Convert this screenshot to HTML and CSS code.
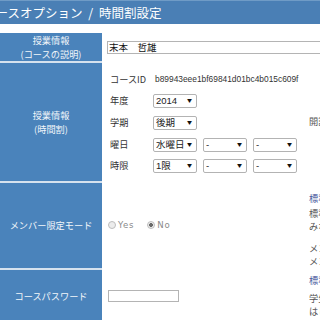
FILE: index.html
```html
<!DOCTYPE html>
<html lang="ja">
<head>
    <meta charset="UTF-8">
    <meta name="viewport" content="width=device-width, initial-scale=1.0">
    <title>コースオプション / 時間割設定</title>
    <link rel="stylesheet" href="styles.css">
</head>
<body>

    <h2 class="title">コースオプション / 時間割設定</h2>

    <table class="form-table">
        <tr>
            <th class="two-line">授業情報<br>(コースの説明)</th>
            <td class="main" colspan="2">
                <input type="text" class="text wide" value="末本　哲雄">
            </td>
        </tr>

        <tr>
            <th>授業情報<br>(時間割)</th>
            <td class="main">
                <div class="fields">
                    <span class="label">コースID</span>
                    <span class="course-id">b89943eee1bf69841d01bc4b015c609f</span>

                    <span class="label">年度</span>
                    <span class="line">
                        <span class="sel"><select><option>2014</option></select></span>
                    </span>

                    <span class="label">学期</span>
                    <span class="line">
                        <span class="sel"><select><option>後期</option></select></span>
                    </span>

                    <span class="label">曜日</span>
                    <span class="line">
                        <span class="sel"><select><option>水曜日</option></select></span>
                        <span class="sel"><select><option>-</option></select></span>
                        <span class="sel"><select><option>-</option></select></span>
                    </span>

                    <span class="label">時限</span>
                    <span class="line">
                        <span class="sel"><select><option>1限</option></select></span>
                        <span class="sel"><select><option>-</option></select></span>
                        <span class="sel"><select><option>-</option></select></span>
                    </span>
                </div>
            </td>
            <td class="note middle">
                <div>開講期間は学期と曜日・時限で設定します</div>
            </td>
        </tr>

        <tr>
            <th>メンバー限定モード</th>
            <td class="main">
                <div class="radios">
                    <label><input type="radio" name="member" disabled> Yes</label>
                    <label><input type="radio" name="member" checked disabled> No</label>
                </div>
            </td>
            <td class="note member">
                <div class="note-head">標準設定：No</div>
                <div class="note-text">標準では登録された学生のみが閲覧できます。<br>みなさんのコースに合わせて設定してください。</div>
                <div class="note-text gap">メンバー限定モードを有効にすると、<br>メンバー以外はコースに入れません。</div>
            </td>
        </tr>

        <tr>
            <th>コースパスワード</th>
            <td class="main">
                <input type="text" class="text short">
            </td>
            <td class="note password">
                <div class="note-head">標準設定：なし</div>
                <div class="note-text small-gap">学生がコースに登録するときのパスワードです。<br>はじめて登録するときだけ入力します。</div>
            </td>
        </tr>
    </table>

</body>
</html>
```

FILE: styles.css
```css
html, body {
    overflow: hidden;
}

body {
    margin: 0;
    font-family: "Noto Sans CJK JP", "Liberation Sans", sans-serif;
    font-size: 9.2px;
    color: #333;
    background-color: #fff;
}

.title {
    margin: 0 0 9px 0;
    height: 23px;
    line-height: 24px;
    border-top: 1px solid #6f9bc6;
    background-color: #4a7fb5;
    color: #fff;
    font-size: 12.5px;
    font-weight: normal;
    text-indent: -17px;
    word-spacing: 3px;
    white-space: nowrap;
}

.form-table {
    border-collapse: separate;
    border-spacing: 0;
    width: 626px;
}

.form-table th,
.form-table td {
    padding: 0;
    border-top: 2px solid transparent;
}

.form-table tr:first-child th,
.form-table tr:first-child td {
    border-top: none;
}

.form-table th {
    width: 102px;
    background-color: #4a83bb;
    border-top-color: #d6e2ee;
    color: #f2f6fa;
    font-weight: normal;
    line-height: 14px;
    text-align: center;
    vertical-align: middle;
    white-space: nowrap;
}

.form-table th.two-line {
    height: 28px;
}

.main {
    width: 198px;
    padding-left: 5px !important;
    vertical-align: middle;
}

.text {
    display: block;
    box-sizing: border-box;
    height: 13px;
    margin: 0;
    padding: 0 1px;
    border: 1px solid #b4b4b4;
    font-family: "Noto Sans CJK JP", sans-serif;
    font-size: 9.5px;
    color: #111;
    background: #fff;
    outline: none;
}

.text.wide {
    width: 420px;
}

.text.short {
    width: 71px;
    margin-left: 1px;
    height: 12px;
}

/* 時間割 */
.fields {
    display: grid;
    grid-template-columns: 43px auto;
    grid-auto-rows: 21.6px;
    align-items: center;
    margin: 5px 0 5px 3px;
}

.label {
    white-space: nowrap;
}

.course-id {
    margin-left: 2px;
    font-family: "Liberation Sans", sans-serif;
    font-size: 8.4px;
    color: #333;
    white-space: nowrap;
}

.line {
    display: flex;
    gap: 6px;
}

.sel {
    position: relative;
    display: block;
    width: 44px;
    height: 14px;
}

.sel select {
    appearance: none;
    -webkit-appearance: none;
    box-sizing: border-box;
    width: 44px;
    height: 14px;
    margin: 0;
    padding: 0 0 0 2px;
    border: 1px solid #b3b3b3;
    border-radius: 2px;
    background: #fff;
    font-family: "Liberation Sans", "Noto Sans CJK JP", sans-serif;
    font-size: 9.5px;
    line-height: 12px;
    color: #222;
}

.sel::after {
    content: "▼";
    position: absolute;
    right: 5px;
    top: 4px;
    font-size: 5px;
    line-height: 6px;
    color: #111;
    pointer-events: none;
}

/* メンバー限定モード */
.radios {
    display: flex;
    gap: 13px;
    margin-left: 1px;
    font-family: "DejaVu Sans", sans-serif;
    font-size: 8.6px;
    letter-spacing: 0.8px;
    color: #8a8a8a;
}

.radios label {
    display: flex;
    align-items: center;
    gap: 2px;
}

.radios input {
    appearance: none;
    -webkit-appearance: none;
    width: 8px;
    height: 8px;
    margin: 0;
    border: 1px solid #bdbdbd;
    border-radius: 50%;
    background: #ececec;
}

.radios input:checked {
    background: radial-gradient(circle, #6a6a6a 0 1.6px, #ececec 2.2px);
}

/* 説明欄 */
.note {
    padding-left: 4px !important;
    line-height: 13px;
    color: #555;
    white-space: nowrap;
}

.note.middle {
    vertical-align: middle;
}

.note.member {
    vertical-align: top;
    padding-top: 9px !important;
}

.note.password {
    vertical-align: top;
    padding-top: 4px !important;
    padding-bottom: 4px !important;
}

.note-head {
    color: #46579c;
}

.note-text {
    margin-top: 2px;
}

.note-text.gap {
    margin-top: 9px;
}

.note-text.small-gap {
    margin-top: 5px;
}
```
